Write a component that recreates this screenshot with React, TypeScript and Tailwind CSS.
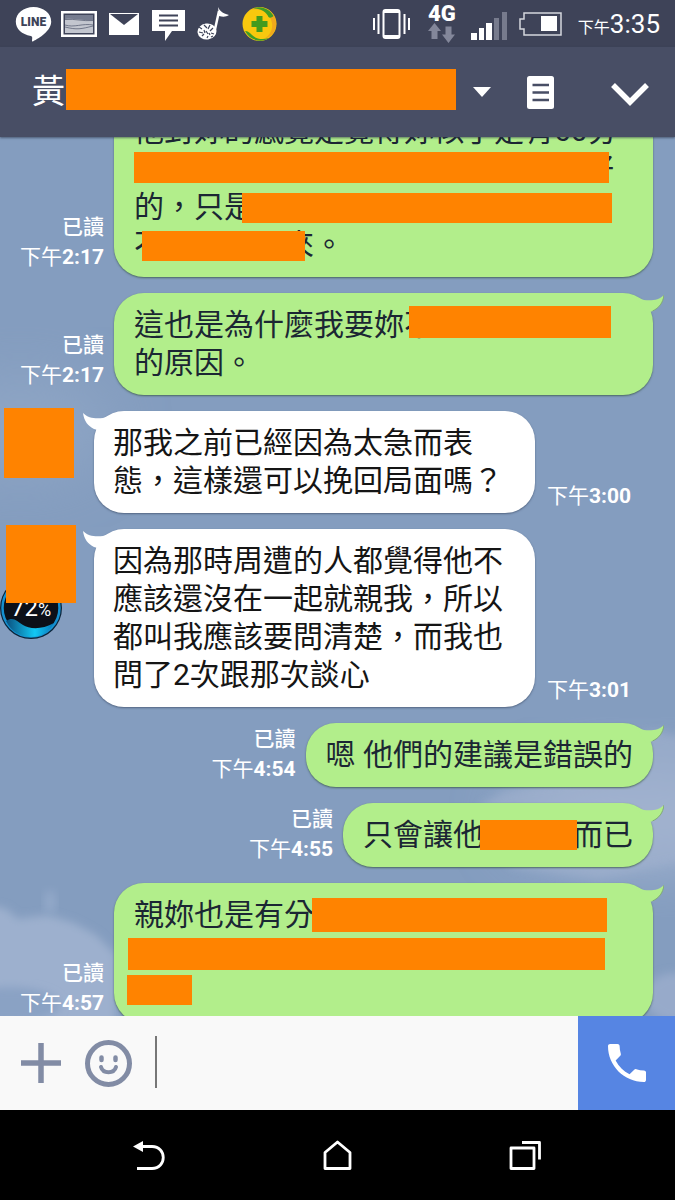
import type { ReactNode } from "react";
import clsx from "clsx";

const FONT = "font-[Roboto,'Noto_Sans_CJK_TC',sans-serif]";

function StatusBar() {
  return (
    <div className="flex h-[47px] shrink-0 items-center bg-[#3e4358] pr-[15px] pl-[15px] text-white">
      <div className="flex items-center">
        <svg className="h-[36px] w-[37px]" viewBox="0 0 37 36" aria-label="LINE">
          <path d="M18.500 1C8.500 1 .8 7.400.8 15.500c0 7.300 6 13 15 14.400 1.600.3 1.600 1.300 1.200 4.600-.1 1 .4 1.200 1.300.7C24 32.200 36.200 25 36.200 15.500 36.200 7.400 28.500 1 18.500 1z" fill="#fff" />
          <text x="18.500" y="20" textAnchor="middle" fontSize="12" fontWeight="900" fontFamily="Roboto" fill="#3e4358">LINE</text>
        </svg>
        <svg className="ml-[9px] h-[26px] w-[36px]" viewBox="0 0 36 26">
          <path d="M0 0h36v26H0z" fill="#fff" />
          <path d="M2.500 2.500h31v21h-31z" fill="#3e4358" />
          <path d="M4 4h28v18H4z" fill="#c3c6cf" />
          <path d="M4 4h28v5c-9 1-18-2-28-1z" fill="#767c8f" />
          <path d="M4 8.500c10-1 18 2 28 1M4 14c9 3 18-2 28 0M4 16c12 3 16 2 28-1" stroke="#5d6377" strokeWidth=".8" fill="none" />
        </svg>
        <svg className="ml-3 h-[22px] w-[30px]" viewBox="0 0 30 22">
          <path d="M0 0h30v22H0z" fill="#fff" />
          <path d="M1 1l14 11L29 1z" fill="#3e4358" />
        </svg>
        <svg className="mt-1 ml-[13px] h-[32px] w-[33px]" viewBox="0 0 33 32">
          <path d="M0 0h33v21H20l-7 10V21H0z" fill="#fff" />
          <path d="M7 5.500h19M7 10.500h19M7 15.500h19" stroke="#3e4358" strokeWidth="2" />
        </svg>
        <svg className="ml-3 h-[34px] w-[32px]" viewBox="0 0 32 34">
          <ellipse cx="10" cy="24.500" rx="9.500" ry="8" fill="#fff" transform="rotate(-8 10 24.500)" />
          <path d="M17 27 22 4" stroke="#fff" strokeWidth="2.500" />
          <path d="M21 0c2 4 4 6 11 8-3 2-6 2-10 1z" fill="#fff" />
          <path d="M2 20l3 2m2-4 3 3m3-3-2 4m5-1-3 3M2 25l4 1m3-2 2 3m3-1 3 1M5 29l2-2m3 4 1-2m3 1 2-1m-9-6 1 3m4 0 1 2" stroke="#3e4358" strokeWidth="1.200" />
        </svg>
        <svg className="ml-[13px] h-[36px] w-[35px]" viewBox="0 0 35 36">
          <circle cx="17.500" cy="18" r="17" fill="#f9c80e" />
          <path d="M9 4c10-3 19 3 21 13 1 7-2 12-8 16 8-2 13-8 12-17C33 5 20-2 9 4z" fill="#f0a81c" />
          <path d="M11 2.500C19-1 28 3 31.500 10c-2 2-4 2-5 1-2-5-8-9-15.500-8.500z" fill="#3f9c27" />
          <path d="M3 25c3 0 5 2 7 4 4 4 10 5 17 3C20 37 8 35 3 25z" fill="#3f9c27" />
          <path d="M14.500 10h6v5h5v6h-5v5h-6v-5h-5v-6h5z" fill="#429b1e" />
        </svg>
      </div>
      <div className="ml-auto flex items-center">
        <svg className="h-[32px] w-[37px]" viewBox="0 0 37 32" fill="none" stroke="#fff" strokeWidth="2">
          <path d="M1 10v12M5.500 6v20M31.500 6v20M36 10v12" />
          <rect x="10.500" y="2" width="16" height="28" rx="2" />
          <path d="M11 3.500h15M11 28.500h15" strokeWidth="3" />
        </svg>
        <div className="ml-[18px] flex w-7 flex-col items-center">
          <span className="text-[22px] leading-[18px] font-black">4G</span>
          <svg className="h-5 w-[27px]" viewBox="0 0 27 20" fill="#83879a">
            <path d="M6.500 0 13 8H9.500v8h-6V8H0zM17.500 3.500h6v8H27L20.500 20 14 11.500h3.500z" />
          </svg>
        </div>
        <svg className="mt-1 ml-[15px] h-[28px] w-[36px]" viewBox="0 0 36 28">
          <path d="M0 21h6v7H0zM8 16h5v12H8zM15 11h6v17h-6z" fill="#fff" />
          <path d="M23 6h5v22h-5zM31 0h5v28h-5z" fill="#777b8d" />
        </svg>
        <svg className="ml-3 h-[24px] w-[43px]" viewBox="0 0 43 24">
          <path d="M5 1h37v22H5v-6H1V7h4z" fill="none" stroke="#d5d7dd" strokeWidth="1.500" />
          <path d="M22 4h16v15H22z" fill="#fff" />
        </svg>
        <div className="ml-4 flex items-baseline whitespace-nowrap">
          <span className="text-[16px]">下午</span>
          <span className="text-[26px] leading-8">3:35</span>
        </div>
      </div>
    </div>
  );
}

function Header() {
  return (
    <header className="z-10 flex h-[90px] shrink-0 items-center bg-[#484e65] pr-[26px] pl-8 text-white shadow-[0_1px_2px_rgba(40,50,70,0.6)]">
      <h1 className="text-[33px] leading-10">黃</h1>
      <div className="mb-[5px] ml-px h-[41px] flex-1 bg-[#ff8300]" />
      <button type="button" aria-label="聊天室選項" className="ml-[17px]">
        <svg className="h-[10px] w-[18px]" viewBox="0 0 18 10">
          <path d="M0 0h18L9 10z" fill="#fff" />
        </svg>
      </button>
      <button type="button" aria-label="記事本" className="ml-9">
        <svg className="h-[33px] w-[27px]" viewBox="0 0 27 33">
          <rect width="27" height="33" rx="2.500" fill="#fff" />
          <path d="M5.500 9h16.500M5.500 16.500h16.500M5.500 24h16.500" stroke="#484e65" strokeWidth="2.600" />
        </svg>
      </button>
      <button type="button" aria-label="展開選單" className="ml-[57px]">
        <svg className="mt-1 h-[23px] w-[38px]" viewBox="0 0 38 23">
          <path d="M2 2l17 17L36 2" fill="none" stroke="#fff" strokeWidth="5.500" />
        </svg>
      </button>
    </header>
  );
}

function Sky() {
  return (
    <svg className="absolute inset-0 h-full w-full" viewBox="0 0 675 879" preserveAspectRatio="none">
      <defs>
        <filter id="soft" x="-20%" y="-20%" width="140%" height="140%">
          <feGaussianBlur stdDeviation="4" />
        </filter>
        <filter id="haze" x="-50%" y="-50%" width="200%" height="200%">
          <feGaussianBlur stdDeviation="28" />
        </filter>
      </defs>
      <rect width="675" height="879" fill="#849dbf" />
      <ellipse cx="20" cy="290" rx="90" ry="50" fill="#8ea5c5" filter="url(#haze)" />
      <ellipse cx="640" cy="680" rx="130" ry="50" fill="#a3b4d1" filter="url(#haze)" />
      <path d="M480 668l25-14 24-4 60-8 36-38 30-10 35 8v120l-90 20-90-12z" fill="#a0b1ce" opacity=".6" filter="url(#soft)" />
      <path d="M-10 768l16 4 12 10 30-4 26 8 22 12 20 20v72H-10z" fill="#9db0ce" filter="url(#soft)" />
      <ellipse cx="50" cy="765" rx="6" ry="12" fill="#93a9c9" filter="url(#soft)" />
      <ellipse cx="10" cy="868" rx="50" ry="18" fill="#8aa2c4" filter="url(#soft)" />
      <ellipse cx="675" cy="860" rx="30" ry="24" fill="#97aaca" filter="url(#soft)" />
    </svg>
  );
}

// Orange block that hides part of a line; the caller gives its place on that line.
function Redaction({ className }: { className: string }) {
  return <span className={clsx("absolute bg-[#ff8300]", className)} />;
}

function Line({ children, wide }: { children?: ReactNode; wide?: boolean }) {
  return <p className={clsx("relative h-[38px] whitespace-pre", wide && "w-[480px]")}>{children}</p>;
}

function Time({ children }: { children: string }) {
  return (
    <time>
      下午<span className="font-bold">{children}</span>
    </time>
  );
}

function Sent({ time, wide, children }: { time: string; wide?: boolean; children: ReactNode }) {
  return (
    <li className="flex items-end justify-end gap-[10px] pr-[22px]">
      <div
        className={clsx(
          "flex flex-col text-right text-[21px] leading-[30px] whitespace-nowrap text-white",
          wide ? "pb-[5px]" : "pb-[3px]",
        )}
      >
        <span className="font-medium">已讀</span>
        <Time>{time}</Time>
      </div>
      <div
        className={clsx(
          "relative rounded-[30px] bg-[#b2ee8b] py-[13px] pl-5 text-[30px] leading-[38px] text-[#1b2633] shadow-[0_1px_2px_rgba(50,80,60,0.7)]",
          wide ? "pr-[39px]" : "pr-5",
        )}
      >
        <svg className="absolute top-[2px] -right-[11px] h-[18px] w-[28px]" viewBox="0 0 28 18">
          <path d="M0 2 8 5c8 1 15 0 20-5-1 8-5 13-11 16L10 18z" fill="#b2ee8b" />
          <path d="M28 0c-1 8-5 13-11.500 16" fill="none" stroke="#7fa874" />
        </svg>
        {children}
      </div>
    </li>
  );
}

function Received({ time, avatar, children }: { time: string; avatar: ReactNode; children: ReactNode }) {
  return (
    <li className="flex items-end gap-3">
      <div className="flex">
        <div className="relative w-[94px] shrink-0">{avatar}</div>
        <div className="relative rounded-[30px] bg-white py-[13px] pr-8 pl-[19px] text-[30px] leading-[38px] text-[#151515] shadow-[0_1px_2px_rgba(50,65,90,0.6)]">
          <svg className="absolute top-[2px] -left-[11px] h-[18px] w-[28px]" viewBox="0 0 28 18">
            <path d="M28 2 20 5C12 6 5 5 0 0c1 8 5 13 11 16l7 2z" fill="#fff" />
          </svg>
          {children}
        </div>
      </div>
      <div className="pb-[2px] text-[21px] leading-[30px] whitespace-nowrap text-white">
        <Time>{time}</Time>
      </div>
    </li>
  );
}

function BatteryBall() {
  return (
    <svg className="absolute top-[48px] left-0 h-[63px] w-[63px]" viewBox="0 0 63 63">
      <defs>
        <linearGradient id="wave" x1="0" x2="1">
          <stop offset="0" stopColor="#0b4f7d" />
          <stop offset=".6" stopColor="#12c8f5" />
          <stop offset="1" stopColor="#0878b8" />
        </linearGradient>
      </defs>
      <circle cx="31" cy="31" r="31" fill="#0b2338" />
      <circle cx="31" cy="31" r="28.500" fill="#0c1018" stroke="#1590d0" strokeWidth="2.500" />
      <path d="M6 44c7-5 11 0 17 4s19 5 31-2C48 56 40 60 31 60S11 55 6 44z" fill="url(#wave)" />
      <text x="11" y="39" fontFamily="Roboto" fontSize="24" fill="#fff">72</text>
      <text x="38" y="39" fontFamily="Roboto" fontSize="18" fill="#fff">%</text>
    </svg>
  );
}

function Chat() {
  return (
    <main className="relative min-h-0 flex-1 overflow-hidden">
      <Sky />
      <ul className="relative -mt-[38px] flex flex-col gap-4">
        <Sent time="2:17" wide>
          <Line wide>他對妳的感覺是覺得妳似乎是有60分</Line>
          <Line>
            <span className="float-right">好</span>
            <Redaction className="top-[2px] left-0 h-[31px] w-[475px]" />
          </Line>
          <Line>
            的，只是
            <Redaction className="top-[5px] left-[108px] h-[30px] w-[370px]" />
          </Line>
          <Line>
            不<span className="inline-block w-[120px]" />來。
            <Redaction className="top-[5px] left-2 h-[30px] w-[163px]" />
          </Line>
        </Sent>
        <Sent time="2:17" wide>
          <Line wide>
            這也是為什麼我要妳不
            <Redaction className="top-0 left-[275px] h-8 w-[202px]" />
          </Line>
          <Line>的原因。</Line>
        </Sent>
        <Received time="3:00" avatar={<div className="-mt-[3px] ml-1 h-[70px] w-[70px] bg-[#ff8300]" />}>
          <Line>那我之前已經因為太急而表</Line>
          <Line>態，這樣還可以挽回局面嗎？</Line>
        </Received>
        <Received
          time="3:01"
          avatar={
            <>
              <BatteryBall />
              <div className="relative -mt-1 ml-[6px] h-[78px] w-[70px] bg-[#ff8300]" />
            </>
          }
        >
          <Line>因為那時周遭的人都覺得他不</Line>
          <Line>應該還沒在一起就親我，所以</Line>
          <Line>都叫我應該要問清楚，而我也</Line>
          <Line>問了2次跟那次談心</Line>
        </Received>
        <Sent time="4:54">
          <Line>嗯 他們的建議是錯誤的</Line>
        </Sent>
        <Sent time="4:55">
          <Line>
            只會讓他<span className="inline-block w-[90px]" />而已
            <Redaction className="top-1 left-[117px] h-[30px] w-[97px]" />
          </Line>
        </Sent>
        <Sent time="4:57" wide>
          <Line wide>
            親妳也是有分
            <Redaction className="top-[2px] left-[178px] h-[34px] w-[295px]" />
          </Line>
          <Line>
            <Redaction className="top-1 -left-[6px] h-8 w-[477px]" />
          </Line>
          <Line>
            <Redaction className="top-[3px] -left-[7px] h-[30px] w-[65px]" />
          </Line>
        </Sent>
      </ul>
    </main>
  );
}

function Composer() {
  return (
    <form className="z-10 flex h-[94px] shrink-0 bg-[#f9f9f9]" onSubmit={(e) => e.preventDefault()}>
      <div className="flex flex-1 items-center pl-[21px]">
        <button type="button" aria-label="附加檔案">
          <svg className="h-10 w-10" viewBox="0 0 40 40" stroke="#828ca5" strokeWidth="5.500">
            <path d="M0 20h40M20 0v40" />
          </svg>
        </button>
        <button type="button" aria-label="貼圖" className="ml-6">
          <svg className="h-[47px] w-[47px]" viewBox="0 0 47 47" fill="none" stroke="#828ca5">
            <circle cx="23.500" cy="23.500" r="21" strokeWidth="5" />
            <path d="M16.500 17.500v2.500M30.500 17.500v2.500" strokeWidth="4.500" strokeLinecap="round" />
            <path d="M16 27c2 7 13 7 15 0" strokeWidth="4" strokeLinecap="round" />
          </svg>
        </button>
        <span className="mb-[3px] ml-[23px] h-[52px] w-[2px] shrink-0 bg-[#777]" />
        <input type="text" aria-label="輸入訊息" className="h-[52px] w-full min-w-0 bg-transparent px-2 text-[30px] outline-none" />
      </div>
      <button type="button" aria-label="通話" className="flex w-[97px] items-center justify-center bg-[#5685e3]">
        <svg className="h-[38px] w-[38px]" viewBox="3 3 18 18">
          <path d="M6.620 10.790c1.440 2.830 3.760 5.140 6.590 6.590l2.200-2.200c.27-.27.67-.36 1.020-.24 1.120.37 2.330.57 3.570.57.55 0 1 .45 1 1V20c0 .55-.45 1-1 1-9.390 0-17-7.610-17-17 0-.55.45-1 1-1h3.500c.55 0 1 .45 1 1 0 1.250.2 2.450.57 3.570.11.35.03.74-.25 1.020z" fill="#fff" />
        </svg>
      </button>
    </form>
  );
}

function NavBar() {
  return (
    <nav className="flex h-[90px] shrink-0 items-center justify-center gap-[157px] bg-black">
      <button type="button" aria-label="返回">
        <svg className="h-[31px] w-[33px]" viewBox="0 0 33 31">
          <path d="M0 6.500 10 1v11z" fill="#fff" />
          <path d="M8 6.500h11c15 0 15 22 0 22H4" fill="none" stroke="#fff" strokeWidth="2.800" />
        </svg>
      </button>
      <button type="button" aria-label="主畫面">
        <svg className="h-[31px] w-[29px]" viewBox="0 0 29 31">
          <path d="M2 28.500V12.500L14.500 2 27 12.500v16z" fill="none" stroke="#fff" strokeWidth="2.800" strokeLinejoin="round" />
        </svg>
      </button>
      <button type="button" aria-label="最近使用的應用程式">
        <svg className="h-[31px] w-[33px]" viewBox="0 0 33 31" fill="none" stroke="#fff" strokeWidth="2.800">
          <path d="M2 8h23v20.500H2zM13 2.500h17.500v17" strokeLinejoin="round" />
        </svg>
      </button>
    </nav>
  );
}

export default function App() {
  return (
    <div className={clsx("flex h-screen flex-col overflow-hidden bg-black", FONT)}>
      <StatusBar />
      <Header />
      <Chat />
      <Composer />
      <NavBar />
    </div>
  );
}
